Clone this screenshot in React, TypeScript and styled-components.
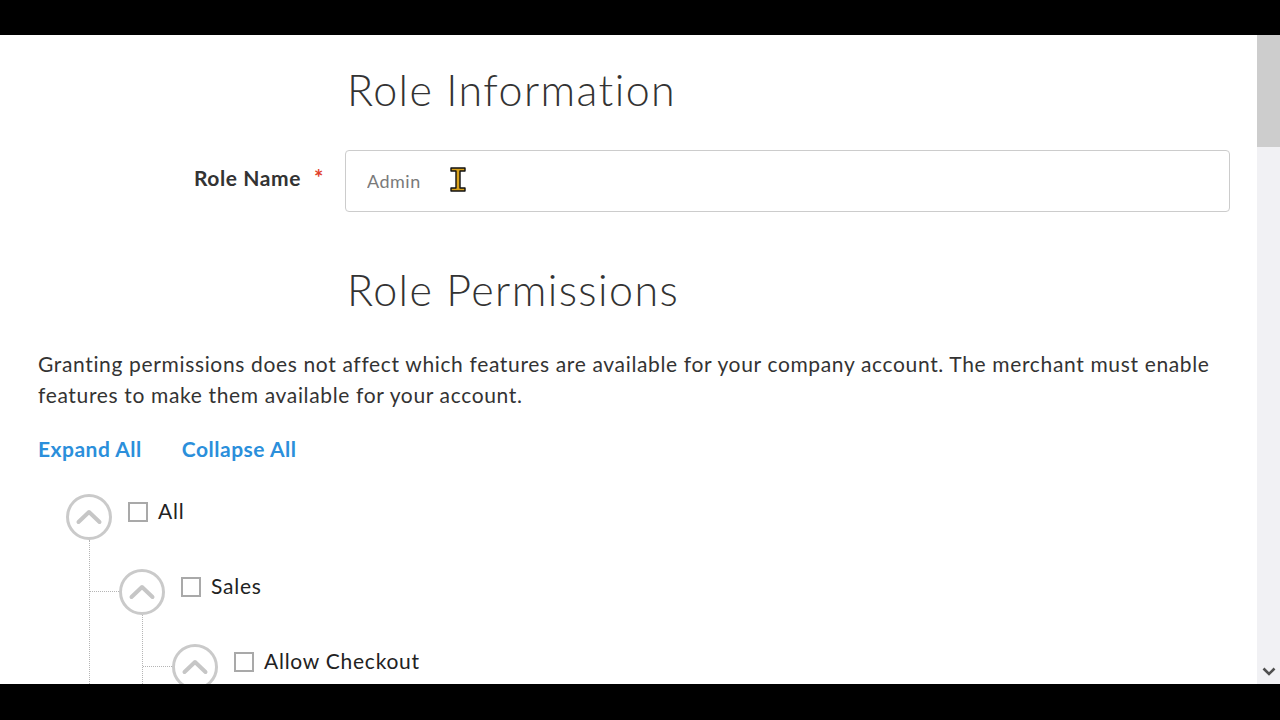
import React from 'react';
import styled, { createGlobalStyle } from 'styled-components';

const GlobalStyle = createGlobalStyle`
  html, body {
    margin: 0;
    padding: 0;
    background: #000;
    overflow: hidden;
  }
  * {
    box-sizing: border-box;
  }
`;

const Screen = styled.div`
  width: 1280px;
  height: 720px;
  display: flex;
  flex-direction: column;
  background: #000;
`;

const Letterbox = styled.div<{ $h: number }>`
  height: ${(p) => p.$h}px;
  flex: none;
  background: #000;
`;

const Viewport = styled.div`
  height: 649px;
  flex: none;
  display: flex;
  background: #fff;
  overflow: hidden;
`;

const Page = styled.main`
  flex: 1;
  padding: 31px 27px 0 38px;
  font-family: Lato, 'Open Sans', sans-serif;
  color: #333;
  overflow: hidden;
`;

const ScrollTrack = styled.div`
  width: 23px;
  flex: none;
  background: #f1f1f4;
  display: flex;
  flex-direction: column;
  justify-content: space-between;
`;

const ScrollThumb = styled.div`
  height: 112px;
  background: #cdcdcd;
`;

const ScrollArrow = styled.div`
  height: 17px;
  display: flex;
  justify-content: center;
  align-items: flex-start;
`;

const SectionTitle = styled.h2<{ $gap?: number }>`
  margin: ${(p) => p.$gap ?? 0}px 0 0 309px;
  font-size: 43px;
  line-height: 48px;
  font-weight: 300;
  color: #333;
  letter-spacing: 1.4px;
`;

const FormRow = styled.div`
  display: grid;
  grid-template-columns: 307px 1fr;
  margin-top: 36px;
`;

const FieldLabel = styled.label`
  display: flex;
  justify-content: flex-end;
  padding: 16px 21px 0 0;
  font-size: 21px;
  line-height: 24px;
  font-weight: 700;
  letter-spacing: 0.6px;
  color: #333;
`;

const Required = styled.span`
  color: #e0402b;
  margin-left: 13px;
  font-size: 22px;
`;

const InputWrap = styled.div`
  position: relative;
`;

const TextInput = styled.input`
  width: 100%;
  height: 62px;
  border: 1px solid #cccccc;
  border-radius: 4px;
  padding: 0 21px;
  font-family: Lato, 'Open Sans', sans-serif;
  font-size: 18px;
  letter-spacing: 0.5px;
  color: #7a7a7a;
  background: #fff;
  outline: none;
`;

const Cursor = styled.svg`
  position: absolute;
  left: 105px;
  top: 17px;
  pointer-events: none;
`;

const Intro = styled.p`
  margin: 34px 0 0;
  font-size: 21px;
  line-height: 31px;
  color: #333;
  letter-spacing: 0.65px;
`;

const LinkBar = styled.div`
  display: flex;
  gap: 40px;
  margin-top: 27px;
`;

const TextLink = styled.a`
  font-size: 21px;
  line-height: 24px;
  font-weight: 700;
  letter-spacing: 0.5px;
  color: #2b8fdb;
  text-decoration: none;
  cursor: pointer;
`;

const Tree = styled.ul`
  list-style: none;
  margin: 33px 0 0;
  padding: 0 0 0 28px;
`;

const Children = styled.ul`
  list-style: none;
  margin: 0 0 0 23px;
  padding: 29px 0 0 29px;
  border-left: 1px dotted #b5b5b5;
  display: flex;
  flex-direction: column;
  gap: 29px;
`;

const Node = styled.li<{ $child?: boolean }>`
  position: relative;
  &::before {
    content: '';
    display: ${(p) => (p.$child ? 'block' : 'none')};
    position: absolute;
    left: -29px;
    top: 22px;
    width: 29px;
    border-top: 1px dotted #b5b5b5;
  }
`;

const Row = styled.div`
  display: flex;
  align-items: flex-start;
  height: 46px;
`;

const Toggle = styled.button`
  width: 46px;
  height: 46px;
  padding: 0;
  border: none;
  background: none;
  cursor: pointer;
  flex: none;
`;

const Box = styled.span`
  width: 20px;
  height: 20px;
  margin: 8px 0 0 16px;
  border: 2px solid #a9a9a9;
  background: #fff;
  flex: none;
`;

const NodeLabel = styled.span`
  margin: 5px 0 0 10px;
  font-size: 21px;
  line-height: 24px;
  letter-spacing: 0.75px;
  color: #222;
`;

const ChevronCircle = () => (
  <svg width="46" height="46" viewBox="0 0 46 46">
    <circle cx="23" cy="23" r="21.5" fill="none" stroke="#cacaca" strokeWidth="3" />
    <polyline
      points="12.5,28 23,18 33.5,28"
      fill="none"
      stroke="#c6c6c6"
      strokeWidth="4"
      strokeLinecap="round"
      strokeLinejoin="round"
    />
  </svg>
);

type TreeItem = { label: string; children?: TreeItem[] };

const permissions: TreeItem = {
  label: 'All',
  children: [
    {
      label: 'Sales',
      children: [{ label: 'Allow Checkout' }],
    },
  ],
};

const TreeNode = ({ item, child }: { item: TreeItem; child?: boolean }) => (
  <Node $child={child}>
    <Row>
      <Toggle aria-label="collapse">
        <ChevronCircle />
      </Toggle>
      <Box />
      <NodeLabel>{item.label}</NodeLabel>
    </Row>
    {item.children && (
      <Children>
        {item.children.map((c) => (
          <TreeNode key={c.label} item={c} child />
        ))}
      </Children>
    )}
  </Node>
);

const App: React.FC = () => {
  return (
    <>
      <GlobalStyle />
      <Screen>
        <Letterbox $h={35} />
        <Viewport>
          <Page>
            <SectionTitle>Role Information</SectionTitle>
            <FormRow>
              <FieldLabel>
                Role Name<Required>*</Required>
              </FieldLabel>
              <InputWrap>
                <TextInput defaultValue="Admin" />
                <Cursor width="16" height="25" viewBox="0 0 16 25">
                  <path
                    d="M1 1h14v3h-5v17h5v3H1v-3h5V4H1z"
                    fill="#d9a21c"
                    stroke="#111"
                    strokeWidth="1.4"
                    strokeLinejoin="round"
                  />
                </Cursor>
              </InputWrap>
            </FormRow>
            <SectionTitle $gap={54}>Role Permissions</SectionTitle>
            <Intro>
              Granting permissions does not affect which features are available for your company
              account. The merchant must enable features to make them available for your account.
            </Intro>
            <LinkBar>
              <TextLink>Expand All</TextLink>
              <TextLink>Collapse All</TextLink>
            </LinkBar>
            <Tree>
              <TreeNode item={permissions} />
            </Tree>
          </Page>
          <ScrollTrack>
            <ScrollThumb />
            <ScrollArrow>
              <svg width="14" height="9" viewBox="0 0 14 9">
                <polyline points="1.5,1.5 7,7 12.5,1.5" fill="none" stroke="#505050" strokeWidth="2.6" />
              </svg>
            </ScrollArrow>
          </ScrollTrack>
        </Viewport>
        <Letterbox $h={36} />
      </Screen>
    </>
  );
};

export default App;
